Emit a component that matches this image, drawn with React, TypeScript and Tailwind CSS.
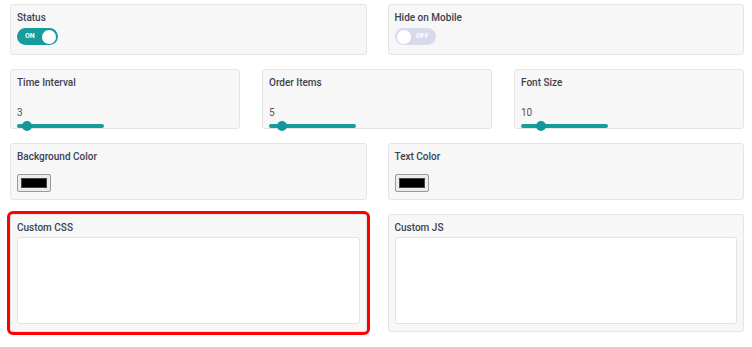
const font = { fontFamily: "Roboto, 'Liberation Sans', sans-serif" };

function Card({
  label,
  children,
  className = "",
}: {
  label: string;
  children: React.ReactNode;
  className?: string;
}) {
  return (
    <div
      className={`rounded-[3px] border border-[#e5e5e5] bg-[#f7f7f7] px-[6px] ${className}`}
    >
      <div className="text-[10px] font-medium leading-[13px] text-[#3d4250]">{label}</div>
      {children}
    </div>
  );
}

function Toggle({ on }: { on: boolean }) {
  return on ? (
    <div className="mt-[4px] flex h-[17px] w-[41px] items-center justify-between rounded-full bg-[#179c9c] pl-[8px] pr-[2px]">
      <span className="text-[7px] font-bold leading-none text-white">ON</span>
      <span className="h-[14px] w-[14px] rounded-full bg-white" />
    </div>
  ) : (
    <div className="mt-[4px] flex h-[17px] w-[41px] items-center justify-between rounded-full bg-[#d8daec] pl-[2px] pr-[7px]">
      <span className="h-[14px] w-[14px] rounded-full bg-white" />
      <span className="text-[7px] font-bold leading-none text-white">OFF</span>
    </div>
  );
}

function Slider({ value, offset }: { value: number; offset: number }) {
  return (
    <>
      <div className="mt-[17px] text-[10px] leading-[13px] text-[#555]">{value}</div>
      <div className="relative mt-[5px] h-[4px] w-[87px] rounded-full bg-[#179c9c]">
        <span
          className="absolute top-[-3px] h-[10px] w-[10px] rounded-full bg-[#14979a]"
          style={{ left: offset - 5 }}
        />
      </div>
    </>
  );
}

function Swatch() {
  return (
    <div className="mt-[11px] flex h-[18px] w-[34px] items-center justify-center rounded-[2px] border border-[#9a9a9a] bg-[#ececec]">
      <div className="h-[10px] w-[26px] border border-[#444] bg-black" />
    </div>
  );
}

export default function App() {
  return (
    <div className="h-[347px] w-[752px] bg-white pl-[10px] pr-[8px] pt-[4px]" style={font}>
      <div className="flex flex-col gap-[14px]">
        <div className="grid grid-cols-2 gap-x-[21px]">
          <Card label="Status" className="h-[51px] pt-[6px]">
            <Toggle on />
          </Card>
          <Card label="Hide on Mobile" className="h-[51px] pt-[6px]">
            <Toggle on={false} />
          </Card>
        </div>

        <div className="grid grid-cols-3 gap-x-[22px]">
          <Card label="Time Interval" className="h-[60px] pt-[6px]">
            <Slider value={3} offset={10} />
          </Card>
          <Card label="Order Items" className="h-[60px] pt-[6px]">
            <Slider value={5} offset={13} />
          </Card>
          <Card label="Font Size" className="h-[60px] pt-[6px]">
            <Slider value={10} offset={20} />
          </Card>
        </div>

        <div className="grid grid-cols-2 gap-x-[21px]">
          <Card label="Background Color" className="h-[57px] pt-[6px]">
            <Swatch />
          </Card>
          <Card label="Text Color" className="h-[57px] pt-[6px]">
            <Swatch />
          </Card>
        </div>

        <div className="grid grid-cols-2 gap-x-[21px]">
          <Card
            label="Custom CSS"
            className="h-[118px] pt-[6px] outline-[3px] outline-[#ff0000]"
          >
            <textarea className="mt-[3px] block h-[87px] w-full resize-none rounded-[3px] border border-[#e2e2e2] bg-white" />
          </Card>
          <Card label="Custom JS" className="h-[118px] pt-[6px]">
            <textarea className="mt-[3px] block h-[87px] w-full resize-none rounded-[3px] border border-[#e2e2e2] bg-white" />
          </Card>
        </div>
      </div>
    </div>
  );
}
